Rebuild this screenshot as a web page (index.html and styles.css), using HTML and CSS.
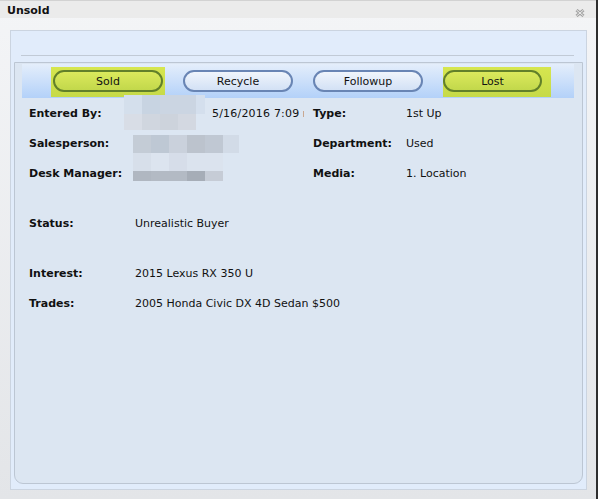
FILE: index.html
```html
<!DOCTYPE html>
<html>
<head>
<meta charset="utf-8">
<link rel="stylesheet" href="styles.css">
</head>
<body>
<div class="window">
  <div class="titlebar">
    <span class="title">Unsold</span>
    <svg class="close" width="10" height="8" viewBox="0 0 10 8">
      <path d="M1.5 1 L8.5 7 M8.5 1 L1.5 7" stroke="#a4a4a4" stroke-width="3" fill="none"/>
      <path d="M1.5 1 L8.5 7 M8.5 1 L1.5 7" stroke="#ececec" stroke-width="1" fill="none"/>
    </svg>
  </div>
  <div class="body">
    <div class="panel">
      <div class="rule"></div>
      <div class="box">
        <div class="btnbar">
          <div class="slot hl"><button class="pill olive">Sold</button></div>
          <div class="slot"><button class="pill blue">Recycle</button></div>
          <div class="slot"><button class="pill blue">Followup</button></div>
          <div class="slot hl last"><button class="pill olive short">Lost</button></div>
        </div>
        <div class="details">
          <div class="lbl">Entered By:</div>
          <div class="val covered">
            <span class="namegap"></span><span class="date">5/16/2016 7:09</span><span class="cut"></span>
            <div class="mosaic m-entered"><div class="mr er1"></div><div class="mr er2"></div></div>
          </div>
          <div class="lbl">Type:</div>
          <div class="val">1st Up</div>

          <div class="lbl">Salesperson:</div>
          <div class="val covered">
            <div class="mosaic m-sales"><div class="mr sr1"></div><div class="mr sr2"></div><div class="mr sr3"></div></div>
          </div>
          <div class="lbl">Department:</div>
          <div class="val">Used</div>

          <div class="lbl">Desk Manager:</div>
          <div class="val"></div>
          <div class="lbl">Media:</div>
          <div class="val">1. Location</div>

          <div class="spacer"></div>

          <div class="lbl">Status:</div>
          <div class="val wide">Unrealistic Buyer</div>

          <div class="spacer"></div>

          <div class="lbl">Interest:</div>
          <div class="val wide">2015 Lexus RX 350 U</div>

          <div class="lbl">Trades:</div>
          <div class="val wide">2005 Honda Civic DX 4D Sedan $500</div>
        </div>
      </div>
    </div>
  </div>
</div>
</body>
</html>
```
FILE: styles.css
```css
html, body {
  margin: 0;
  padding: 0;
  background: #ffffff;
}
body {
  font-family: "DejaVu Sans", Verdana, sans-serif;
  font-size: 11px;
  color: #111;
}
.window {
  width: 596px;
  height: 499px;
  border-right: 2px solid #2e2e2e;
  background: linear-gradient(#f4f5f7, #e3e5e8);
  display: flex;
  flex-direction: column;
}
.titlebar {
  height: 17px;
  border-top: 1px solid #d2d2d2;
  background: #ebebeb;
  display: flex;
  justify-content: space-between;
  align-items: flex-start;
}
.title {
  font-weight: bold;
  line-height: 14px;
  padding: 3px 0 0 7px;
  color: #111;
}
.close {
  margin: 8px 11px 0 0;
}
.body {
  flex: 1;
  padding: 12px 0 9px 10px;
  display: flex;
}
.panel {
  width: 575px;
  border: 1px solid #cbd4e0;
  background: #e1ecfb;
  display: flex;
  flex-direction: column;
}
.rule {
  margin: 24px 0 0 10px;
  width: 553px;
  height: 1px;
  background: #c1cad6;
}
.box {
  margin: 6px 0 5px 3px;
  width: 567px;
  flex: 1;
  border: 1px solid #bcc6d3;
  border-radius: 0 0 9px 9px;
  background: #dce6f2;
}
.btnbar {
  margin: 1px 0 0 7px;
  width: 552px;
  height: 34px;
  box-sizing: border-box;
  padding: 3px 0 0 29px;
  background: linear-gradient(#e4eefb, #b3d1f9);
  display: flex;
  align-items: flex-start;
  gap: 16px;
}
.slot {
  padding: 3px 2px 5px 2px;
}
.slot.hl {
  background: linear-gradient(#d6e64f, #c6da48);
}
.slot.last {
  margin-left: 2px;
  padding: 3px 9px 5px 0;
}
.pill {
  display: block;
  width: 110px;
  height: 22px;
  box-sizing: border-box;
  border-radius: 11px;
  padding: 2px 0 0 0;
  font-family: "DejaVu Sans", Verdana, sans-serif;
  font-size: 11px;
  line-height: 16px;
  color: #111;
  text-align: center;
}
.pill.short {
  width: 99px;
}
.pill.olive {
  border: 2px solid #62802a;
  background: linear-gradient(#dbe95c, #c2d84b);
}
.pill.blue {
  border: 2px solid #6985b4;
  background: linear-gradient(#f0f5fc, #d3e1f5);
}
.details {
  margin-top: 1px;
  padding-left: 14px;
  display: grid;
  grid-template-columns: 106px 178px 93px 1fr;
  grid-template-rows: 30px 30px 30px 20px 30px 20px 30px 30px;
  line-height: 30px;
}
.lbl {
  font-weight: bold;
  white-space: nowrap;
}
.val {
  white-space: nowrap;
}
.val.wide {
  grid-column: 2 / span 3;
}
.spacer {
  grid-column: 1 / -1;
}
.covered {
  position: relative;
}
.namegap {
  display: inline-block;
  width: 77px;
}
.date {
  letter-spacing: 0.2px;
}
.cut {
  display: inline-block;
  width: 1px;
  height: 6px;
  margin-left: 4px;
  background: #c9a892;
}
.mosaic {
  position: absolute;
}
.mr {
  display: block;
}
.m-entered {
  left: -11px;
  top: -4px;
  width: 81px;
}
.er1 {
  height: 19px;
  background: linear-gradient(to right, #d4dfec 0 18px, #c8d4e2 18px 36px, #cbd5e2 36px 54px, #cbd5e2 54px 72px, #d4dfed 72px 81px);
}
.er2 {
  height: 16px;
  background: linear-gradient(to right, #d8dde6 0 18px, #d0d6df 18px 36px, #cdd3dc 36px 54px, #d3d8e1 54px 72px, transparent 72px 81px);
}
.m-sales {
  left: -2px;
  top: 6px;
  width: 106px;
}
.sr1 {
  height: 18px;
  background: linear-gradient(to right, #c4ccd6 0 18px, #bec8d4 18px 36px, #cad1dc 36px 54px, #bcc3cd 54px 72px, #c0c8d3 72px 90px, #d2dbe7 90px 106px);
}
.sr2 {
  height: 18px;
  background: linear-gradient(to right, #d7dfea 0 18px, #dce4ef 18px 36px, #d6dde9 36px 54px, #dbe3ee 54px 72px, #dbe3ee 72px 90px, transparent 90px 106px);
}
.sr3 {
  height: 10px;
  background: linear-gradient(to right, #b0b7c1 0 18px, #b3bac4 18px 36px, #b3bac4 36px 54px, #a6adb7 54px 72px, #c6ccd6 72px 90px, transparent 90px 106px);
}
```
